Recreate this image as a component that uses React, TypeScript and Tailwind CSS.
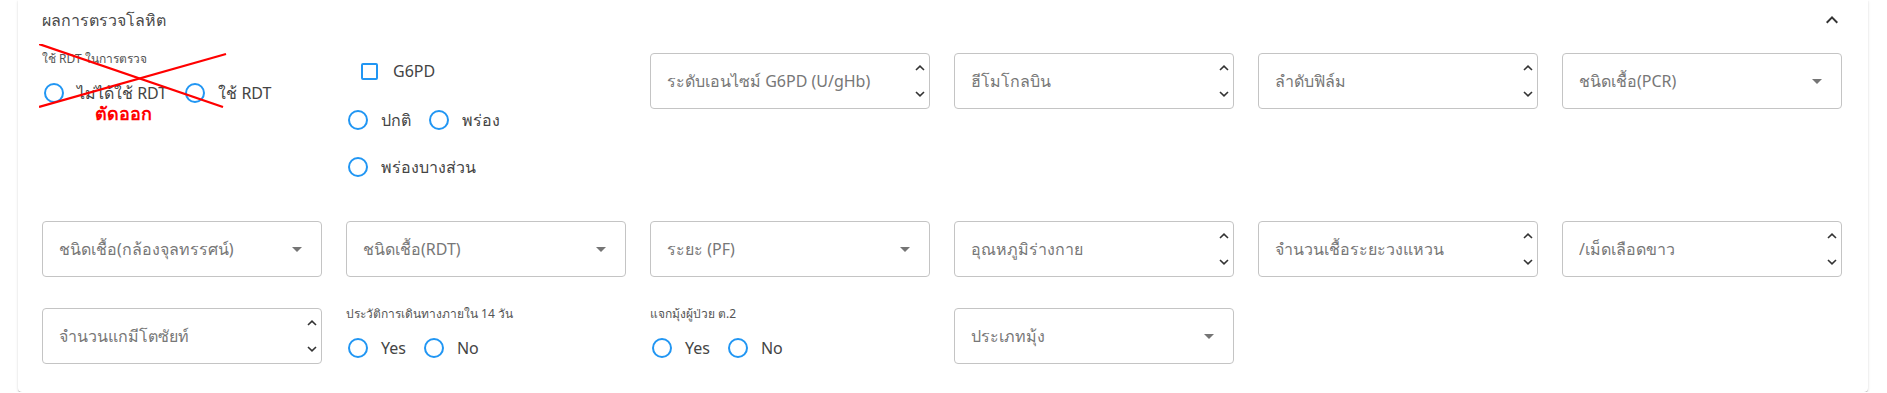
import React from "react";

const COLS = "grid grid-cols-[repeat(6,280px)] gap-x-[24px]";

function ChevronUp({ className = "" }: { className?: string }) {
  return (
    <svg width="10" height="6" viewBox="0 0 10 6" className={className}>
      <path d="M1 5 L5 1.2 L9 5" fill="none" stroke="#333" strokeWidth="1.6" />
    </svg>
  );
}

function ChevronDown({ className = "" }: { className?: string }) {
  return (
    <svg width="10" height="6" viewBox="0 0 10 6" className={className}>
      <path d="M1 1 L5 4.8 L9 1" fill="none" stroke="#333" strokeWidth="1.6" />
    </svg>
  );
}

function NumberField({ label }: { label: string }) {
  return (
    <div className="h-[56px] w-full rounded-[4px] border border-[#c4c4c4] flex items-center pl-[16px]">
      <span className="flex-1 truncate text-[16px] text-[#777]">{label}</span>
      <div className="flex flex-col justify-between h-full py-[11px] pr-[4px]">
        <ChevronUp />
        <ChevronDown />
      </div>
    </div>
  );
}

function SelectField({ label }: { label: string }) {
  return (
    <div className="h-[56px] w-full rounded-[4px] border border-[#c4c4c4] flex items-center pl-[16px] pr-[12px]">
      <span className="flex-1 truncate text-[16px] text-[#777]">{label}</span>
      <svg width="24" height="24" viewBox="0 0 24 24">
        <path d="M7 10l5 5 5-5z" fill="#757575" />
      </svg>
    </div>
  );
}

function RadioOpt({ label }: { label: string }) {
  return (
    <label className="flex items-center h-[42px] mr-[16px]">
      <span className="-ml-[9px] w-[42px] h-[42px] flex items-center justify-center">
        <span className="w-[20px] h-[20px] rounded-full border-2 border-[#2196f3]" />
      </span>
      <span className="ml-[2px] text-[16px] text-[#444]">{label}</span>
    </label>
  );
}

function RadioGroup({ title, options }: { title: string; options: string[] }) {
  return (
    <div>
      <div className="h-[12px] leading-[12px] text-[12px] text-[#555] whitespace-nowrap">
        {title}
      </div>
      <div className="mt-[7px] flex items-center">
        {options.map((o) => (
          <RadioOpt key={o} label={o} />
        ))}
      </div>
    </div>
  );
}

export default function App() {
  return (
    <div className="bg-white pl-[18px] pr-[19px] font-['Noto_Sans','Roboto',sans-serif]">
      <div className="w-[1850px] rounded-b-[4px] bg-white shadow-[0_2px_1px_-1px_rgba(0,0,0,0.2),0_1px_1px_0_rgba(0,0,0,0.14),0_1px_3px_0_rgba(0,0,0,0.12)] px-[24px] pb-[23px]">
        {/* header */}
        <div className="h-[40px] flex items-center justify-between">
          <span className="text-[16px] text-[#4a4a4a]">ผลการตรวจโลหิต</span>
          <svg width="24" height="24" viewBox="0 0 24 24">
            <path d="M7.41 15.41 12 10.83l4.59 4.58L18 14l-6-6-6 6z" fill="#333" />
          </svg>
        </div>

        <div className={`${COLS} mt-[13px] gap-y-[31px]`}>
          {/* row 1 */}
          <div className="relative">
            <RadioGroup title="ใช้ RDT ในการตรวจ" options={["ไม่ได้ใช้ RDT", "ใช้ RDT"]} />
            <svg
              width="190"
              height="64"
              viewBox="0 0 190 64"
              className="absolute left-[-3px] top-[-9px] pointer-events-none"
            >
              <line x1="0" y1="0" x2="184" y2="63" stroke="#ff0000" strokeWidth="2.2" />
              <line x1="0" y1="63" x2="187" y2="10" stroke="#ff0000" strokeWidth="2.2" />
            </svg>
            <span className="absolute left-[53px] top-[49px] text-[18px] font-bold text-[#ff0000] leading-[22px]">
              ตัดออก
            </span>
          </div>

          <div className="h-[137px]">
            <label className="flex items-center h-[36px]">
              <span className="ml-[15px] w-[17px] h-[17px] rounded-[2px] border-2 border-[#2196f3]" />
              <span className="ml-[15px] text-[16px] text-[#444]">G6PD</span>
            </label>
            <div className="mt-[7px]">
              <div className="flex items-center h-[47px]">
                <RadioOpt label="ปกติ" />
                <RadioOpt label="พร่อง" />
              </div>
              <div className="flex items-center h-[47px]">
                <RadioOpt label="พร่องบางส่วน" />
              </div>
            </div>
          </div>

          <NumberField label="ระดับเอนไซม์ G6PD (U/gHb)" />
          <NumberField label="ฮีโมโกลบิน" />
          <NumberField label="ลำดับฟิล์ม" />
          <SelectField label="ชนิดเชื้อ(PCR)" />

          {/* row 2 */}
          <SelectField label="ชนิดเชื้อ(กล้องจุลทรรศน์)" />
          <SelectField label="ชนิดเชื้อ(RDT)" />
          <SelectField label="ระยะ (PF)" />
          <NumberField label="อุณหภูมิร่างกาย" />
          <NumberField label="จำนวนเชื้อระยะวงแหวน" />
          <NumberField label="/เม็ดเลือดขาว" />

          {/* row 3 */}
          <NumberField label="จำนวนแกมีโตซัยท์" />
          <RadioGroup title="ประวัติการเดินทางภายใน 14 วัน" options={["Yes", "No"]} />
          <RadioGroup title="แจกมุ้งผู้ป่วย ต.2" options={["Yes", "No"]} />
          <SelectField label="ประเภทมุ้ง" />
        </div>
      </div>
    </div>
  );
}
